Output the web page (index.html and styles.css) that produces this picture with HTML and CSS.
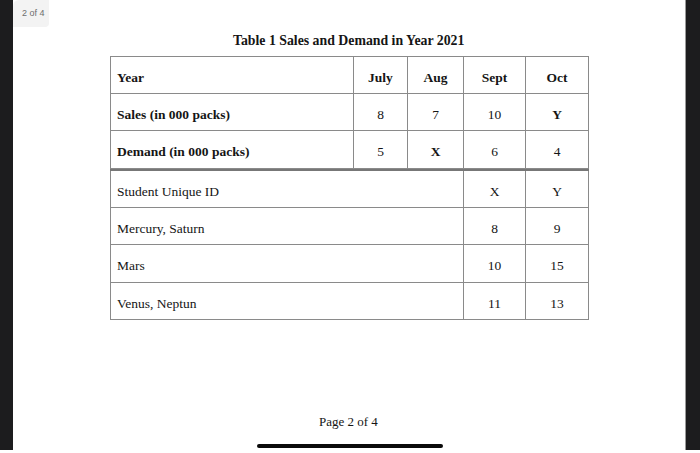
FILE: index.html
```html
<!DOCTYPE html>
<html>
<head>
<meta charset="utf-8">
<link rel="stylesheet" href="styles.css">
</head>
<body>
<div class="frame">
  <div class="edge edge-left"></div>
  <main class="page">
    <div class="badge">2 of 4</div>
    <h1 class="title">Table 1 Sales and Demand in Year 2021</h1>
    <table class="grid grid-top">
      <colgroup>
        <col class="c-label"><col class="c-jul"><col class="c-aug"><col class="c-sep"><col class="c-oct">
      </colgroup>
      <tr class="bold">
        <td class="label">Year</td><td>July</td><td>Aug</td><td>Sept</td><td>Oct</td>
      </tr>
      <tr>
        <td class="label b">Sales (in 000 packs)</td><td>8</td><td>7</td><td>10</td><td class="b">Y</td>
      </tr>
      <tr>
        <td class="label b">Demand (in 000 packs)</td><td>5</td><td class="b">X</td><td>6</td><td>4</td>
      </tr>
    </table>
    <table class="grid grid-bottom">
      <colgroup>
        <col class="c-label2"><col class="c-sep"><col class="c-oct">
      </colgroup>
      <tr><td class="label">Student Unique ID</td><td>X</td><td>Y</td></tr>
      <tr><td class="label">Mercury, Saturn</td><td>8</td><td>9</td></tr>
      <tr><td class="label">Mars</td><td>10</td><td>15</td></tr>
      <tr><td class="label">Venus, Neptun</td><td>11</td><td>13</td></tr>
    </table>
    <p class="footer">Page 2 of 4</p>
    <div class="home-bar"></div>
  </main>
  <div class="edge edge-right"></div>
</div>
</body>
</html>
```
FILE: styles.css
```css
html, body {
  margin: 0;
  padding: 0;
  background: #ffffff;
}
.frame {
  display: flex;
  width: 700px;
  height: 453px;
  overflow: hidden;
}
.edge {
  background: #1c1c1e;
  height: 450px;
  flex: none;
}
.edge-left { width: 13px; }
.edge-right { width: 14px; border-left: 1px solid #9a9a9a; }
.page {
  position: relative;
  flex: 1;
  display: flex;
  flex-direction: column;
  align-items: flex-start;
  padding-left: 97px;
  font-family: "Liberation Serif", "Times New Roman", serif;
  color: #151515;
}
.badge {
  position: absolute;
  left: 0;
  top: 0;
  width: 36px;
  height: 27px;
  background: #f3f3f3;
  border-bottom-right-radius: 4px;
  border-top-left-radius: 6px;
  font-family: "Liberation Sans", Arial, sans-serif;
  font-size: 9px;
  color: #6e6e6e;
  line-height: 27px;
  padding-left: 9px;
  box-sizing: border-box;
}
.title {
  margin: 33px 0 0 123px;
  font-size: 13.8px;
  font-weight: bold;
  line-height: 16px;
  height: 16px;
}
.grid {
  border-collapse: collapse;
  table-layout: fixed;
  width: 479px;
  font-size: 13.5px;
}
.grid-top { margin-top: 7px; }
.grid td {
  border: 1px solid #8a8a8a;
  text-align: center;
  vertical-align: middle;
  height: 30.5px;
  padding: 6px 6px 0 6px;
  line-height: 16px;
}
.grid-top tr:first-child td { height: 29.5px; }
.grid-bottom tr:first-child td { border-top: 2px solid #777; height: 30px; }
.grid td.label { text-align: left; }
.bold td, td.b { font-weight: bold; }
.c-label { width: 243px; }
.c-jul { width: 54px; }
.c-aug { width: 56px; }
.c-sep { width: 62px; }
.c-oct { width: 63px; }
.c-label2 { width: 353px; }
.footer {
  margin: 94px 0 0 209px;
  font-size: 13px;
  line-height: 16px;
}
.home-bar {
  margin: 14px 0 0 147px;
  width: 186px;
  height: 4px;
  border-radius: 2px;
  background: #0a0a0a;
}
```
